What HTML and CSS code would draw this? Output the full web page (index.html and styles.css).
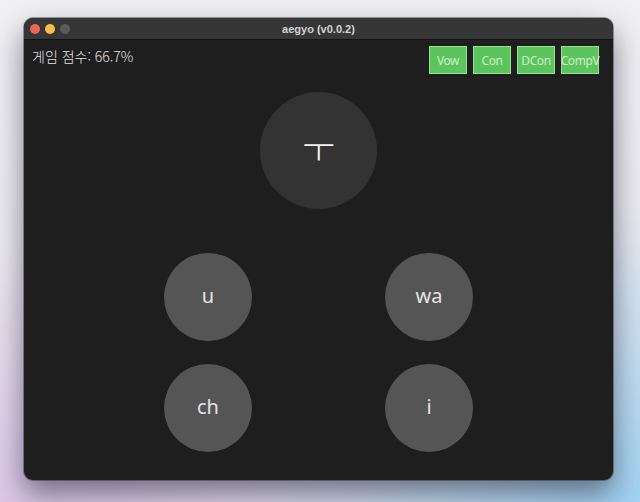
FILE: index.html
```html
<!DOCTYPE html>
<html lang="ko">
<head>
<meta charset="utf-8">
<title>aegyo (v0.0.2)</title>
<link rel="stylesheet" href="styles.css">
</head>
<body>
<div class="desktop">
  <div class="window">
    <div class="titlebar">
      <div class="lights">
        <span class="light red"></span>
        <span class="light yellow"></span>
        <span class="light grey"></span>
      </div>
      <div class="title">aegyo (v0.0.2)</div>
      <div></div>
    </div>
    <div class="content">
      <div class="header">
        <div class="score">게임 점수: 66.7%</div>
        <div class="modes">
          <button class="mode">Vow</button>
          <button class="mode">Con</button>
          <button class="mode">DCon</button>
          <button class="mode">CompV</button>
        </div>
      </div>
      <div class="stage">
        <div class="prompt">ㅜ</div>
        <div class="choices">
          <div class="choice">u</div>
          <div class="choice">wa</div>
          <div class="choice">ch</div>
          <div class="choice">i</div>
        </div>
      </div>
    </div>
  </div>
</div>
</body>
</html>
```
FILE: styles.css
```css
html, body {
  margin: 0;
  padding: 0;
}
body {
  width: 640px;
  height: 502px;
  overflow: hidden;
  font-family: "Noto Sans", "Noto Sans CJK KR", sans-serif;
  background:
    radial-gradient(ellipse 420px 260px at 0% 100%, rgba(222, 200, 232, 1) 0%, rgba(222, 200, 232, 0) 100%),
    radial-gradient(ellipse 420px 300px at 100% 100%, rgba(160, 210, 242, 1) 0%, rgba(160, 210, 242, 0) 100%),
    linear-gradient(180deg, #f1f0f4 0%, #e9e6ee 100%);
}
.desktop {
  padding: 18px 27px 0 24px;
}
.window {
  width: 589px;
  height: 462px;
  border-radius: 9px;
  overflow: hidden;
  background: #1e1e1e;
  box-shadow: 0 14px 30px rgba(40, 40, 60, 0.6), 0 0 0 1px rgba(0, 0, 0, 0.35);
  display: flex;
  flex-direction: column;
}
.titlebar {
  height: 21px;
  background: #363636;
  display: grid;
  grid-template-columns: 1fr auto 1fr;
  align-items: center;
  border-bottom: 1px solid #141414;
}
.lights {
  display: flex;
  gap: 5px;
  padding-left: 6px;
}
.light {
  width: 10px;
  height: 10px;
  border-radius: 50%;
}
.red { background: #ec6559; }
.yellow { background: #f3be4c; }
.grey { background: #5a5a5a; }
.title {
  font-family: "Liberation Sans", "Noto Sans", sans-serif;
  font-size: 11px;
  font-weight: bold;
  color: #d4d4d4;
}
.content {
  flex: 1;
  padding-top: 6px;
}
.header {
  display: flex;
  justify-content: space-between;
  align-items: flex-start;
  padding: 0 14px 0 8px;
}
.score {
  font-family: "Noto Sans CJK KR", "Noto Sans", sans-serif;
  font-size: 14px;
  font-weight: 300;
  line-height: 20px;
  color: #e6e6e6;
}
.modes {
  display: flex;
  gap: 6px;
}
.mode {
  width: 38px;
  height: 28px;
  padding: 0;
  margin: 0;
  background: #5cc45c;
  border: 1px solid #9adf9a;
  color: #cfeccf;
  font-family: "Noto Sans", sans-serif;
  font-size: 12px;
  letter-spacing: -0.4px;
  white-space: nowrap;
  overflow: visible;
  display: flex;
  align-items: center;
  justify-content: center;
}
.stage {
  display: flex;
  flex-direction: column;
  align-items: center;
  padding-top: 18px;
}
.prompt {
  width: 117px;
  height: 117px;
  box-sizing: border-box;
  padding-bottom: 8px;
  border-radius: 50%;
  background: #333333;
  color: #f2f2f2;
  font-family: "Noto Sans CJK KR", sans-serif;
  font-weight: 300;
  font-size: 36px;
  display: flex;
  align-items: center;
  justify-content: center;
}
.choices {
  margin-top: 44px;
  display: grid;
  grid-template-columns: 88px 88px;
  grid-auto-rows: 88px;
  column-gap: 133px;
  row-gap: 23px;
}
.choice {
  box-sizing: border-box;
  padding-bottom: 3px;
  border-radius: 50%;
  background: #555555;
  color: #e4e4e4;
  font-family: "Noto Sans", sans-serif;
  font-size: 20px;
  display: flex;
  align-items: center;
  justify-content: center;
}
```
